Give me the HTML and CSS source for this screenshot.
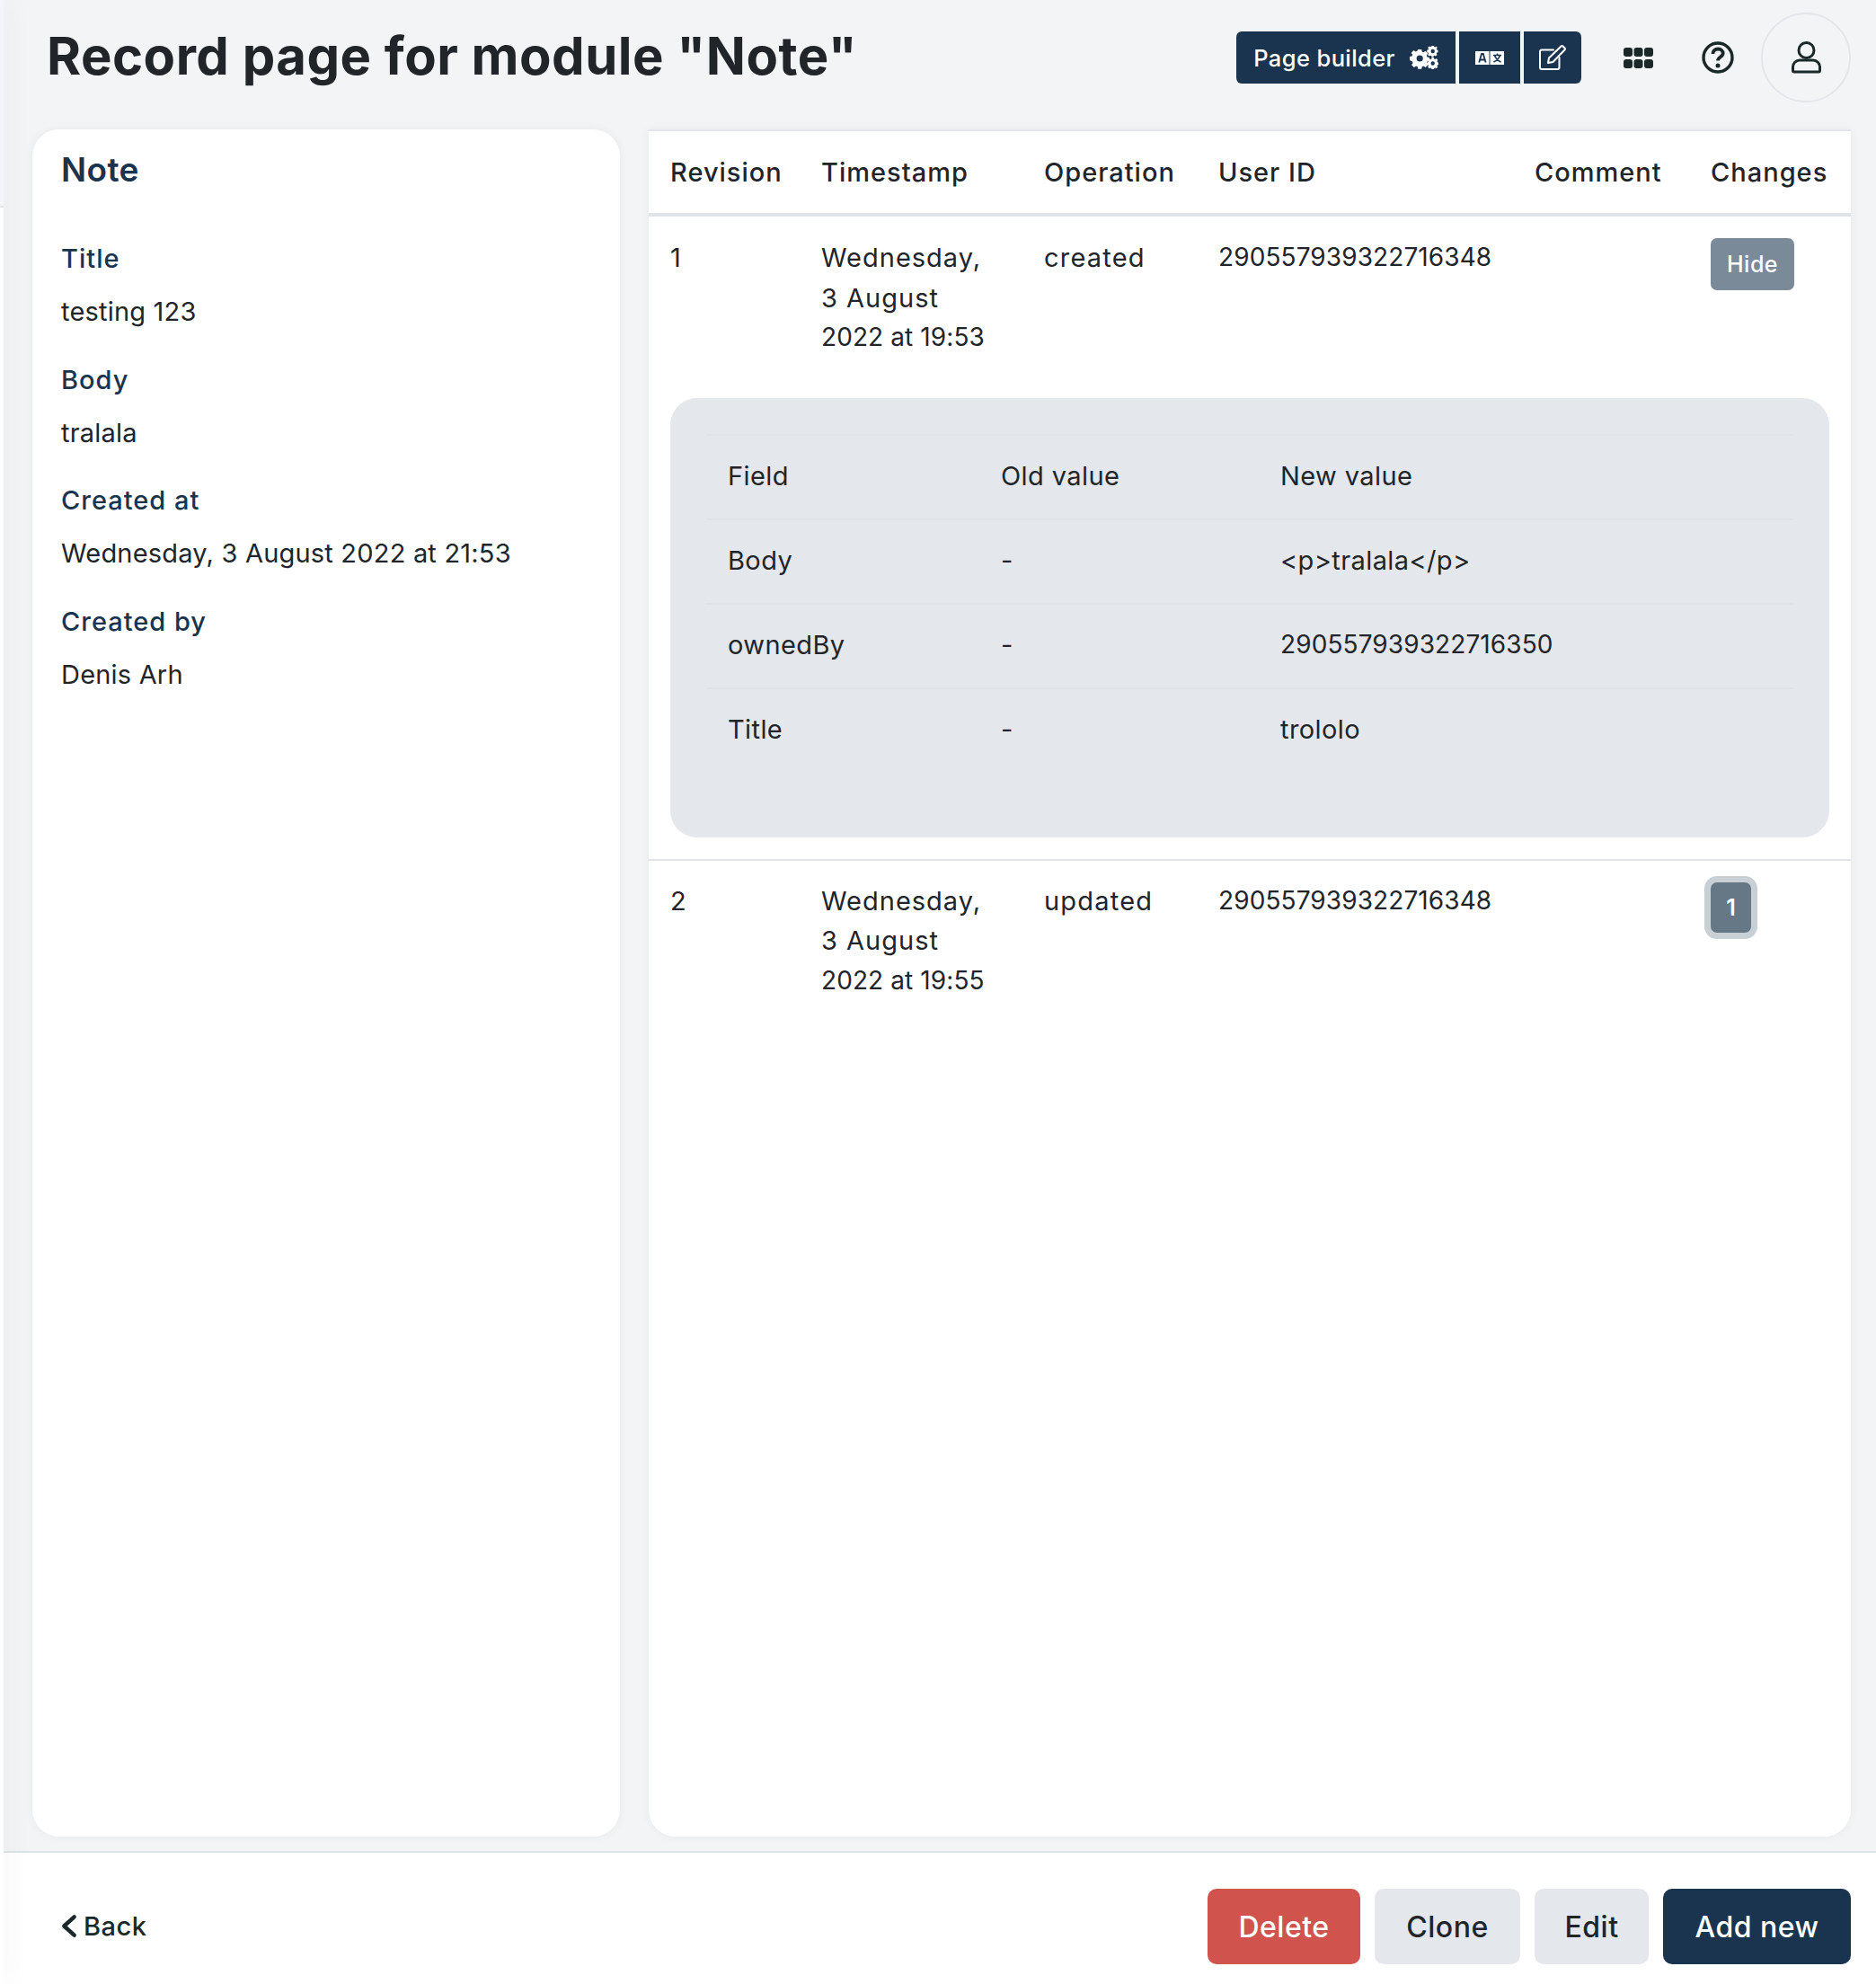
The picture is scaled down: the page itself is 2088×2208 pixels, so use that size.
FILE: index.html
```html
<!DOCTYPE html>
<html lang="en">
<head>
    <meta charset="UTF-8">
    <meta name="viewport" content="width=device-width, initial-scale=1.0">
    <title>Record page for module "Note"</title>
    <link rel="stylesheet" href="styles.css">
</head>
<body>
    <div class="app">
        <aside class="side-edge">
            <div class="side-edge-top"></div>
        </aside>

        <div class="main">
            <header class="topbar">
                <h1 class="page-title">Record page for module "Note"</h1>
                <div class="builder-group">
                    <button class="builder-btn builder-first">
                        Page builder
                        <svg class="icon-cogs" viewBox="0 0 32 26" fill="#fff">
                            <path fill-rule="evenodd" d="M9.2 5h4l.5 2.6 1.6.7 2.2-1.5 2.8 2.8-1.5 2.2.7 1.6 2.5.5v4l-2.5.5-.7 1.6 1.5 2.2-2.8 2.8-2.2-1.5-1.6.7-.5 2.6h-4l-.5-2.6-1.6-.7-2.2 1.5-2.8-2.8 1.5-2.2-.7-1.6L0 17v-4l2.5-.5.7-1.6-1.5-2.2 2.8-2.8 2.2 1.5 1.6-.7zM11.2 11.4a3.6 3.6 0 1 0 0 7.2 3.6 3.6 0 0 0 0-7.2z" transform="translate(0 -1)"/>
                            <path fill-rule="evenodd" d="M26 0h2.4l.3 1.4 1.2.5 1.2-.8 1.2 1.7-1 1 .4 1.2 1.3.3v2.4l-1.3.3-.4 1.2.8 1.2-1.7 1.7-1.2-.8-1 .4-.3 1.3H26l-.3-1.3-1.2-.4-1.2.8-1.7-1.7.8-1.2-.4-1.2-1.3-.3V5.300l1.3-.3.4-1.2-.8-1.2 1.7-1.7 1.2.8 1.2-.5zM27.200 4.300a2.200 2.200 0 1 0 0 4.400 2.200 2.200 0 0 0 0-4.400z" transform="translate(-1.500 -.5)"/>
                            <path fill-rule="evenodd" d="M26 13h2.400l.3 1.400 1.200.5 1.200-.8 1.700 1.700-.8 1.200.4 1.200 1.300.3v2.400l-1.300.3-.4 1.200.8 1.200-1.700 1.700-1.200-.8-1.200.5-.3 1.300H26l-.3-1.300-1.200-.5-1.200.8-1.700-1.700.8-1.200-.4-1.200-1.300-.3v-2.400l1.300-.3.4-1.200-.8-1.200 1.700-1.700 1.200.8 1.200-.5zM27.200 17.300a2.200 2.200 0 1 0 0 4.400 2.200 2.200 0 0 0 0-4.400z" transform="translate(-1.500 0)"/>
                        </svg>
                    </button>
                    <button class="builder-btn builder-mid">
                        <svg class="icon-lang" viewBox="0 0 32 15">
                            <rect width="15.500" height="15" fill="#fff"/>
                            <rect x="16.500" width="15.500" height="15" fill="#fff"/>
                            <path d="M4.200 12.500 7 3h1.800l2.800 9.500M5.300 9.500h5.200" fill="none" stroke="#1a344f" stroke-width="1.800"/>
                            <path d="M20 4.500h9M24.500 2.500v2M21.500 4.500c1 3 3.500 6 7 7.500M27.500 4.500c-1 3-3.500 6-7 7.500" fill="none" stroke="#1a344f" stroke-width="1.700"/>
                        </svg>
                    </button>
                    <button class="builder-btn builder-last">
                        <svg class="icon-edit" viewBox="0 0 30 28" fill="none" stroke="#fff" stroke-width="2" stroke-linejoin="round" stroke-linecap="round">
                            <path d="M16 5.500H3a2 2 0 0 0-2 2V25a2 2 0 0 0 2 2h17.500a2 2 0 0 0 2-2V14"/>
                            <path d="M10 20l1-5.500L24.500 1.500a1.500 1.500 0 0 1 2 0l2 2a1.500 1.500 0 0 1 0 2L15.500 19z"/>
                        </svg>
                    </button>
                </div>
                <svg class="icon-apps" viewBox="0 0 33 23" fill="#1b2828">
                    <rect x="0" y="0" width="10" height="10" rx="3"/>
                    <rect x="11.500" y="0" width="10" height="10" rx="3"/>
                    <rect x="23" y="0" width="10" height="10" rx="3"/>
                    <rect x="0" y="13" width="10" height="10" rx="3"/>
                    <rect x="11.500" y="13" width="10" height="10" rx="3"/>
                    <rect x="23" y="13" width="10" height="10" rx="3"/>
                </svg>
                <svg class="icon-help" viewBox="0 0 36 36" fill="none" stroke="#1b2828" stroke-width="3.400">
                    <circle cx="18" cy="18" r="16"/>
                    <path d="M12.500 14c0-3.500 2.500-5.500 5.700-5.500s5.500 2 5.500 4.800c0 4.200-5.700 4.200-5.700 8.200" stroke-width="3.800"/>
                    <circle cx="18" cy="27" r="2.500" fill="#1b2828" stroke="none"/>
                </svg>
                <div class="user-circle">
                    <svg class="icon-user" viewBox="0 0 33 36" fill="none" stroke="#1b2828" stroke-width="3">
                        <circle cx="16.500" cy="10" r="8.500"/>
                        <path d="M9 21h15a7.500 7.500 0 0 1 7.500 7.500v4a1.500 1.500 0 0 1-1.500 1.500H3a1.500 1.500 0 0 1-1.500-1.500v-4A7.500 7.500 0 0 1 9 21z"/>
                    </svg>
                </div>
            </header>

            <section class="content">
                <div class="card record-card">
                    <h2 class="record-title">Note</h2>
                    <div class="field">
                        <div class="field-label">Title</div>
                        <div class="field-value">testing 123</div>
                    </div>
                    <div class="field">
                        <div class="field-label">Body</div>
                        <div class="field-value">tralala</div>
                    </div>
                    <div class="field">
                        <div class="field-label">Created at</div>
                        <div class="field-value">Wednesday, 3 August 2022 at 21:53</div>
                    </div>
                    <div class="field">
                        <div class="field-label">Created by</div>
                        <div class="field-value">Denis Arh</div>
                    </div>
                </div>

                <div class="card revisions-card">
                    <table class="revisions">
                        <colgroup>
                            <col class="col-rev"><col class="col-time"><col class="col-op">
                            <col class="col-user"><col class="col-comment"><col class="col-changes">
                        </colgroup>
                        <thead>
                            <tr>
                                <th>Revision</th>
                                <th>Timestamp</th>
                                <th>Operation</th>
                                <th>User ID</th>
                                <th>Comment</th>
                                <th>Changes</th>
                            </tr>
                        </thead>
                        <tbody>
                            <tr>
                                <td>1</td>
                                <td class="num"><span class="word">Wednesday,<br>3 August</span><br>2022 at 19:53</td>
                                <td class="op">created</td>
                                <td class="num">290557939322716348</td>
                                <td></td>
                                <td><button class="hide-btn">Hide</button></td>
                            </tr>
                            <tr class="details-row">
                                <td colspan="6">
                                    <div class="details">
                                        <table class="changes">
                                            <colgroup>
                                                <col class="col-field"><col class="col-old"><col>
                                            </colgroup>
                                            <tr><td>Field</td><td>Old value</td><td>New value</td></tr>
                                            <tr><td>Body</td><td>-</td><td>&lt;p&gt;tralala&lt;/p&gt;</td></tr>
                                            <tr><td>ownedBy</td><td>-</td><td class="num">290557939322716350</td></tr>
                                            <tr><td>Title</td><td>-</td><td>trololo</td></tr>
                                        </table>
                                    </div>
                                </td>
                            </tr>
                            <tr class="rev-two">
                                <td>2</td>
                                <td class="num"><span class="word">Wednesday,<br>3 August</span><br>2022 at 19:55</td>
                                <td class="op">updated</td>
                                <td class="num">290557939322716348</td>
                                <td></td>
                                <td><button class="count-btn">1</button></td>
                            </tr>
                        </tbody>
                    </table>
                </div>
            </section>

            <footer class="footer">
                <a class="back-link">
                    <svg class="icon-back" viewBox="0 0 16 24" fill="none" stroke="#1b2828" stroke-width="4" stroke-linecap="round" stroke-linejoin="round">
                        <path d="M13 3L3 12l10 9"/>
                    </svg>
                    Back
                </a>
                <div class="footer-actions">
                    <button class="btn btn-danger">Delete</button>
                    <button class="btn btn-light btn-clone">Clone</button>
                    <button class="btn btn-light btn-edit">Edit</button>
                    <button class="btn btn-dark">Add new</button>
                </div>
            </footer>
        </div>
    </div>
</body>
</html>
```

FILE: styles.css
```css
* {
    box-sizing: border-box;
}
body {
    margin: 0;
    font-family: Inter, "Liberation Sans", sans-serif;
    font-size: 29px;
    letter-spacing: 0.4px;
    line-height: 43.5px;
    color: #212529;
    background-color: #f3f4f6;
}
button {
    font-family: inherit;
    border: none;
    cursor: pointer;
}
.app {
    display: flex;
    height: 2208px;
    overflow: hidden;
}

/* thin edge of the collapsed sidebar */
.side-edge {
    position: relative;
    z-index: 1;
    flex: 0 0 4px;
    background: #fff;
    box-shadow: 0 0 30px rgba(0, 0, 0, 0.16);
}
.side-edge-top {
    height: 231px;
    background: #f3f5fa;
    border-bottom: 2px solid #e0e2e6;
}
.main {
    flex: 1;
    display: flex;
    flex-direction: column;
    min-width: 0;
}

/* top bar */
.topbar {
    height: 144px;
    padding: 0 28px 0 48px;
    display: flex;
    align-items: flex-start;
}
.page-title {
    flex: 1;
    margin: 26px 0 0;
    font-size: 58px;
    line-height: 72px;
    font-weight: 700;
    letter-spacing: 0.5px;
    color: #212529;
    white-space: nowrap;
}
.builder-group {
    display: flex;
    gap: 4px;
    margin-top: 35px;
    margin-right: -1px;
}
.builder-btn {
    height: 58px;
    padding: 0;
    background: #1a344f;
    color: #fff;
    font-size: 25.5px;
    letter-spacing: 0.4px;
    font-weight: 500;
    display: flex;
    align-items: center;
    justify-content: center;
}
.builder-first {
    width: 244px;
    gap: 16px;
    border-radius: 6px 0 0 6px;
}
.builder-mid {
    width: 68px;
}
.builder-last {
    width: 64px;
    border-radius: 0 6px 6px 0;
}
.icon-cogs {
    width: 32px;
    height: 26px;
}
.icon-lang {
    width: 32px;
    height: 15px;
}
.icon-edit {
    width: 30px;
    height: 28px;
}
.icon-apps {
    width: 33px;
    height: 23px;
    margin: 53px 0 0 48px;
}
.icon-help {
    width: 36px;
    height: 36px;
    margin: 46px 0 0 54px;
}
.user-circle {
    width: 100px;
    height: 100px;
    margin: 14px 0 0 30px;
    border: 2px solid #e3e6ea;
    border-radius: 50%;
    display: flex;
    align-items: center;
    justify-content: center;
}
.icon-user {
    width: 33px;
    height: 36px;
}

/* two cards */
.content {
    flex: 1;
    display: flex;
    gap: 32px;
    padding: 0 28px 16px 32px;
    min-height: 0;
}
.card {
    background: #fff;
    border-radius: 30px;
    box-shadow: 0 0 12px rgba(0, 0, 0, 0.05);
}
.record-card {
    flex: 0 0 654px;
    padding: 21px 32px;
}
.record-title {
    margin: 0 0 53px;
    font-size: 37px;
    line-height: 48px;
    font-weight: 600;
    color: #1a344f;
}
.field {
    height: 134.700px;
}
.field-label {
    font-weight: 500;
    color: #1a344f;
    letter-spacing: 1px;
    line-height: 44px;
    margin-bottom: 15px;
}
.field-value {
    line-height: 44px;
    letter-spacing: 0.2px;
}

/* revisions */
.revisions-card {
    flex: 1;
    border-top: 2px solid #e3e6ea;
    border-top-left-radius: 0;
    border-top-right-radius: 0;
    overflow: hidden;
}
.revisions {
    width: 100%;
    table-layout: fixed;
    border-collapse: collapse;
}
.col-rev { width: 168px; }
.col-time { width: 248px; }
.col-op { width: 194px; }
.col-user { width: 352px; }
.col-comment { width: 196px; }
.revisions th {
    height: 93px;
    padding: 0 0 0 24px;
    font-weight: 500;
    letter-spacing: 1px;
    text-align: left;
    white-space: nowrap;
    border-bottom: 4px solid #e0e3e8;
}
.revisions > tbody > tr > td {
    padding: 24px 0 25px 24px;
    vertical-align: top;
}
.revisions > tbody > .details-row > td {
    padding: 20px 24px 24px;
    border-bottom: 2px solid #e0e3e8;
}
.revisions > tbody > .rev-two > td {
    padding-top: 23px;
}
.num {
    font-size: 28px;
    letter-spacing: 0.1px;
}
.word {
    font-size: 29px;
    letter-spacing: 1px;
}
.op {
    letter-spacing: 1.2px;
}
.hide-btn {
    display: block;
    width: 93px;
    height: 58px;
    padding: 0;
    background: #7a8a98;
    color: #fff;
    font-size: 25px;
    letter-spacing: 0.5px;
    font-weight: 500;
    border-radius: 7px;
}
.count-btn {
    display: block;
    width: 59px;
    height: 70px;
    margin: -6px 0 0 -7px;
    padding: 0;
    background: #667786;
    color: #fff;
    font-size: 25px;
    font-weight: 600;
    border: 7px solid #c8d0d6;
    border-radius: 14px;
}
.details {
    height: 489px;
    padding: 40px 40px 0;
    background: #e4e7ec;
    border-radius: 30px;
}
.changes {
    width: 100%;
    table-layout: fixed;
    border-collapse: collapse;
}
.col-field { width: 304px; }
.col-old { width: 311px; }
.changes td {
    height: 94px;
    padding: 0 0 2px 24px;
    border-top: 2px solid #dfe2e7;
}

/* footer */
.footer {
    flex: 0 0 148px;
    padding: 40px 28px 0 64px;
    background: #fff;
    border-top: 2px solid #dde2e4;
    display: flex;
    align-items: flex-start;
    justify-content: space-between;
}
.back-link {
    display: flex;
    align-items: center;
    gap: 7px;
    margin-top: 20px;
    letter-spacing: 0.5px;
    font-weight: 500;
    color: #1b2828;
}
.icon-back {
    width: 18px;
    height: 27px;
}
.footer-actions {
    display: flex;
    gap: 16px;
}
.btn {
    height: 84px;
    padding: 0;
    font-size: 32px;
    letter-spacing: 0.5px;
    font-weight: 500;
    border-radius: 10px;
}
.btn-danger {
    width: 170px;
    background: #d1534e;
    color: #fff;
}
.btn-light {
    background: #e4e7ec;
    color: #212529;
}
.btn-clone {
    width: 162px;
}
.btn-edit {
    width: 127px;
}
.btn-dark {
    width: 209px;
    background: #1a344f;
    color: #fff;
}
```
